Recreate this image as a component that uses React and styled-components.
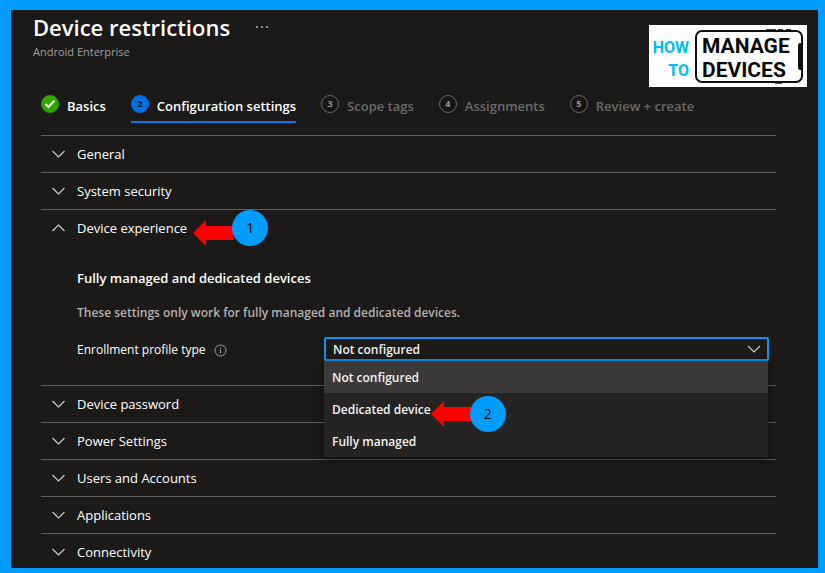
import { useState } from "react";
import styled, { createGlobalStyle } from "styled-components";

const GlobalStyle = createGlobalStyle`
  * {
    box-sizing: border-box;
  }

  body {
    margin: 0;
    font-family: "Open Sans", "Noto Sans", sans-serif;
    font-size: 13px;
    line-height: 20px;
    color: #f3f2f1;
  }

  button, select {
    font: inherit;
    color: inherit;
  }
`;

const Frame = styled.div`
  height: 100vh;
  padding: 10px 7px 5px 11px;
  background: #009dff;
`;

const Blade = styled.main`
  height: 100%;
  overflow: hidden;
  padding: 0 42px 0 30px;
  background: #1b1a19;
`;

const Header = styled.header`
  position: relative;
  display: flex;
  flex-direction: column;
  margin-left: -8px;
  padding-top: 2px;
`;

const TitleRow = styled.div`
  display: flex;
  align-items: center;
  gap: 24px;

  h1 {
    margin: 0;
    font-size: 22px;
    line-height: 30px;
    font-weight: 600;
    color: #ffffff;
  }
`;

const MoreButton = styled.button`
  display: flex;
  padding: 0;
  border: 0;
  background: none;
`;

const Subtitle = styled.div`
  font-size: 11px;
  font-weight: 500;
  color: #a19f9d;
`;

const Logo = styled.svg`
  position: absolute;
  top: 15px;
  right: -31px;
  width: 158px;
  height: 62px;
`;

const Steps = styled.nav`
  display: flex;
  gap: 25px;
  margin: 32px 0 12px;
`;

const Step = styled.a`
  display: flex;
  align-items: flex-start;
  gap: 8px;
  height: 29px;
  border-bottom: 2px solid ${(props) => (props.$current ? "#0078f0" : "transparent")};
  color: ${(props) => (props.$pending ? "#6b6967" : "#ffffff")};
  font-weight: 600;
  text-decoration: none;
  white-space: nowrap;

  .label {
    padding-top: 2px;
  }
`;

const StepMark = styled.span`
  display: flex;
  align-items: center;
  justify-content: center;
  width: 18px;
  height: 18px;
  margin-top: 1px;
  border-radius: 50%;
  border: 1px solid ${(props) => props.$border};
  background: ${(props) => props.$fill};
  color: ${(props) => props.$color};
  font-size: 9px;
  line-height: 16px;
  font-weight: 700;
`;

const Section = styled.section`
  border-top: 1px solid #5f5d5b;
`;

const SectionButton = styled.button`
  display: flex;
  align-items: center;
  gap: 12px;
  width: 100%;
  height: 36px;
  padding: 0 0 0 11px;
  border: 0;
  background: none;
  font-weight: 500;
  color: #ffffff;
  text-align: left;
`;

const Anchor = styled.span`
  position: relative;
`;

const Callout = styled.span`
  position: absolute;
  z-index: 3;
  left: 100%;
  top: ${(props) => props.$top};
  display: flex;
  align-items: flex-start;
  margin-left: ${(props) => props.$gap};

  svg {
    flex: none;
    margin: ${(props) => props.$arrowTop} -1px 0 0;
  }

  .number {
    width: 36px;
    height: 36px;
    border-radius: 50%;
    background: #009dff;
    color: #0b0b0b;
    font-size: 14px;
    line-height: 36px;
    font-weight: 400;
    text-align: center;
  }
`;

const Settings = styled.div`
  padding: 22px 7px 24px 36px;

  h2 {
    margin: 0;
    font-size: 13px;
    line-height: 20px;
    font-weight: 600;
    color: #ffffff;
  }

  p {
    margin: 15px 0 14px;
    font-size: 12px;
    font-weight: 600;
    color: #b3b0ad;
  }
`;

const Field = styled.div`
  display: grid;
  grid-template-columns: 247px 1fr;
  align-items: center;

  .fieldLabel {
    display: flex;
    align-items: center;
    gap: 8px;
    padding-top: 2px;
    font-size: 12px;
    font-weight: 500;
    color: #ffffff;
  }
`;

const Combo = styled.div`
  position: relative;
  display: flex;
  align-items: center;

  > svg {
    position: absolute;
    right: 8px;
    pointer-events: none;
  }
`;

const Select = styled.select`
  appearance: none;
  width: 100%;
  height: 24px;
  padding: 2px 7px 0;
  border: 2px solid #0b93f5;
  border-radius: 2px;
  outline: 0;
  background: #1b1a19;
  font-size: 12px;
  line-height: 18px;
  font-weight: 600;
`;

const Menu = styled.ul`
  position: absolute;
  z-index: 2;
  top: 100%;
  left: 0;
  right: 1px;
  margin: 0;
  padding: 0;
  list-style: none;
  background: #252423;
  box-shadow: 0 3px 8px rgba(0, 0, 0, 0.5);
`;

const MenuItem = styled.li`
  height: 32px;
  padding: 7px 8px 5px;
  background: ${(props) => (props.$selected ? "#3b3a39" : "transparent")};
  font-size: 12px;
  font-weight: 600;
  cursor: pointer;
`;

const steps = [
  { id: 1, label: "Basics", state: "done" },
  { id: 2, label: "Configuration settings", state: "current" },
  { id: 3, label: "Scope tags", state: "pending" },
  { id: 4, label: "Assignments", state: "pending" },
  { id: 5, label: "Review + create", state: "pending" },
];

const markColors = {
  done: { $border: "#2ea500", $fill: "#2ea500", $color: "#ffffff" },
  current: { $border: "#0072e5", $fill: "#0072e5", $color: "#111111" },
  pending: { $border: "#6b6967", $fill: "#161514", $color: "#979593" },
};

const sections = [
  "General",
  "System security",
  "Device experience",
  "Device password",
  "Power Settings",
  "Users and Accounts",
  "Applications",
  "Connectivity",
];

const profileTypes = ["Not configured", "Dedicated device", "Fully managed"];

function Chevron({ up, width = 13 }) {
  return (
    <svg width={width} height="8" viewBox="0 0 13 8" fill="none" stroke="#d2d0ce" strokeWidth="1.1">
      <path d={up ? "M.5 7 6.5 1l6 6" : "M.5 1l6 6 6-6"} />
    </svg>
  );
}

function Marker({ number, top, gap, arrowTop }) {
  return (
    <Callout $top={top} $gap={gap} $arrowTop={arrowTop}>
      <svg width="40" height="26" viewBox="0 0 40 26">
        <path d="M0 13 13 0v6h27v14H13v6z" fill="#ff0000" />
      </svg>
      <span className="number">{number}</span>
    </Callout>
  );
}

function BrandLogo() {
  return (
    <Logo viewBox="0 0 158 62" fontFamily="Roboto, 'Liberation Sans', sans-serif" fontWeight="700">
      <rect width="158" height="62" fill="#ffffff" />
      <g fill="#00bdf5" fontSize="16" textAnchor="end">
        <text x="40" y="28">HOW</text>
        <text x="40" y="51">TO</text>
      </g>
      <rect x="47" y="6" width="106" height="51" rx="6" fill="none" stroke="#111111" strokeWidth="2" />
      <path d="M117 4.7h10M129 4.7h5M137 4.7h5M126 58.2h7" stroke="#111111" strokeWidth="1" />
      <path d="M153 18h-2q-2 0-2 3v21q0 3 2 3h2z" fill="#111111" />
      <g fill="#0a0a0a" fontSize="21">
        <text x="53" y="28">MANAGE</text>
        <text x="53" y="52">DEVICES</text>
      </g>
    </Logo>
  );
}

function ProfileTypeField() {
  const [value, setValue] = useState(profileTypes[0]);

  return (
    <Field>
      <label className="fieldLabel" htmlFor="profileType">
        Enrollment profile type
        <svg width="13" height="13" viewBox="0 0 13 13" fill="none" stroke="#a19f9d">
          <circle cx="6.5" cy="6.5" r="5.5" />
          <path d="M6.5 5.5v4M6.5 3.3v1.2" />
        </svg>
      </label>
      <Combo>
        <Select id="profileType" value={value} onChange={(e) => setValue(e.target.value)}>
          {profileTypes.map((el) => (
            <option key={el}>{el}</option>
          ))}
        </Select>
        <Chevron width={14} />
        <Menu role="listbox" aria-label="Enrollment profile type">
          {profileTypes.map((el) => (
            <MenuItem
              key={el}
              role="option"
              aria-selected={el === value}
              $selected={el === value}
              onClick={() => setValue(el)}
            >
              <Anchor>
                {el}
                {el === "Dedicated device" && (
                  <Marker number={2} top="-5px" gap="0" arrowTop="5px" />
                )}
              </Anchor>
            </MenuItem>
          ))}
        </Menu>
      </Combo>
    </Field>
  );
}

function App() {
  const [open, setOpen] = useState("Device experience");

  return (
    <>
      <GlobalStyle />
      <Frame>
        <Blade>
          <Header>
            <TitleRow>
              <h1>Device restrictions</h1>
              <MoreButton aria-label="More">
                <svg width="14" height="4" viewBox="0 0 14 4" fill="#c8c6c4">
                  <circle cx="3" cy="2" r="0.9" />
                  <circle cx="8" cy="2" r="0.9" />
                  <circle cx="13" cy="2" r="0.9" />
                </svg>
              </MoreButton>
            </TitleRow>
            <Subtitle>Android Enterprise</Subtitle>
            <BrandLogo />
          </Header>
          <Steps>
            {steps.map((el) => (
              <Step
                href="#"
                key={el.id}
                $current={el.state === "current"}
                $pending={el.state === "pending"}
              >
                <StepMark {...markColors[el.state]}>
                  {el.state === "done" ? (
                    <svg width="12" height="10" viewBox="0 0 12 10" fill="none" stroke="#ffffff" strokeWidth="2">
                      <path d="M1.5 5 4.5 8 10.5 1.5" />
                    </svg>
                  ) : (
                    el.id
                  )}
                </StepMark>
                <span className="label">{el.label}</span>
              </Step>
            ))}
          </Steps>
          {sections.map((el) => (
            <Section key={el}>
              <SectionButton
                aria-expanded={el === open}
                onClick={() => setOpen(el === open ? "" : el)}
              >
                <Chevron up={el === open} />
                <Anchor>
                  {el}
                  {el === "Device experience" && (
                    <Marker number={1} top="-8px" gap="6px" arrowTop="10px" />
                  )}
                </Anchor>
              </SectionButton>
              {el === "Device experience" && el === open && (
                <Settings>
                  <h2>Fully managed and dedicated devices</h2>
                  <p>These settings only work for fully managed and dedicated devices.</p>
                  <ProfileTypeField />
                </Settings>
              )}
            </Section>
          ))}
        </Blade>
      </Frame>
    </>
  );
}

export default App;
